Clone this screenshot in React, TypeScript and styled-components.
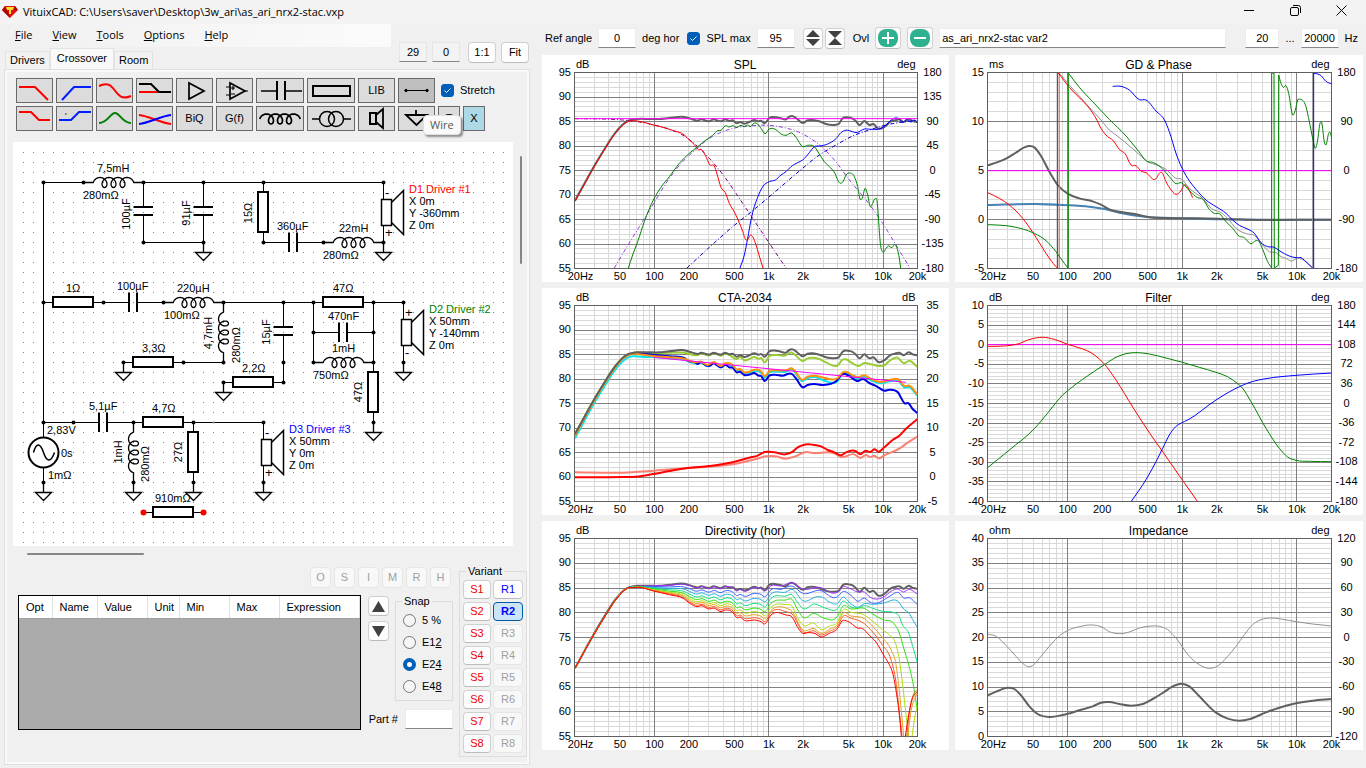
import React from "react";
import styled, { createGlobalStyle } from "styled-components";

const GlobalStyle = createGlobalStyle`
  *, *::before, *::after { box-sizing: border-box; }
  body {
    margin: 0;
    background: #f0f0f0;
    color: #000;
    font-family: "Liberation Sans", Arial, sans-serif;
    font-size: 11px;
    line-height: 13px;
  }
  button, input { font: inherit; color: inherit; margin: 0; }
`;

/* ---------- shell ---------- */

const Window = styled.div`
  display: flex;
  flex-direction: column;
  min-height: 100vh;
`;

const TitleBar = styled.header`
  display: flex;
  align-items: center;
  height: 24px;
  padding: 0 5px 0 2px;
  gap: 5px;
  background: #f3f3f3;
`;

const TitleText = styled.h1`
  flex: 1;
  margin: 0 0 2px;
  font-family: "Open Sans", sans-serif;
  font-size: 11px;
  font-weight: 400;
`;

const CaptionButton = styled.button`
  display: grid;
  place-items: center;
  width: 40px;
  height: 20px;
  margin-bottom: 4px;
  padding: 0;
  border: 0;
  background: none;
`;

const Body = styled.main`
  display: flex;
  flex: 1;
`;

const LeftColumn = styled.div`
  display: flex;
  flex-direction: column;
  flex: 0 0 536px;
`;

const LeftHead = styled.div`
  display: flex;
  height: 45px;
`;

const HeadStack = styled.div`
  display: flex;
  flex-direction: column;
  justify-content: space-between;
  width: 391px;
`;

const MenuBar = styled.nav`
  display: flex;
  gap: 4px;
  height: 23px;
  padding-left: 7px;
  background: linear-gradient(90deg, #f0f0f0, #fbfbfb);
`;

const MenuItem = styled.button`
  padding: 0 8px 2px;
  border: 0;
  background: none;
  font-family: "Open Sans", sans-serif;
  font-size: 11px;
`;

const Tabs = styled.div`
  display: flex;
  align-items: flex-end;
  padding-left: 5px;
`;

const Tab = styled.button<{ $active?: boolean }>`
  height: ${(p) => (p.$active ? 21 : 18)}px;
  padding: ${(p) => (p.$active ? "0 6px 2px" : "0 4px 1px")};
  border: 1px solid #e3e3e3;
  border-bottom: 0;
  background: ${(p) => (p.$active ? "#f9f9f9" : "#f2f2f2")};
`;

const ZoomTools = styled.div`
  display: flex;
  gap: 5px;
  padding: 18px 0 0 8px;
`;

const Readout = styled.output`
  display: grid;
  place-items: center;
  width: 28px;
  height: 20px;
  border: 1px solid #e6e6e6;
  border-bottom-color: #868686;
  background: #f3f3f3;
`;

const PlainButton = styled.button<{ $w: number; $h: number; $tone?: string; $active?: boolean; $gap?: number }>`
  display: grid;
  place-items: center;
  width: ${(p) => p.$w}px;
  height: ${(p) => p.$h}px;
  margin-left: ${(p) => p.$gap ?? 0}px;
  padding: 0;
  border: 1px solid ${(p) => (p.$active ? "#005a9e" : "#d0d0d0")};
  border-bottom-color: ${(p) => (p.$active ? "#005a9e" : "#bcbcbc")};
  border-radius: 4px;
  background: ${(p) => (p.$active ? "#cce4f7" : "#fdfdfd")};
  color: ${(p) => p.$tone ?? "#000"};
  font-size: 11px;
  font-weight: ${(p) => (p.$active ? 700 : 400)};

  &:disabled {
    border-color: #e6e6e6;
    background: #f8f8f8;
    color: #a0a0a0;
  }
`;

const Panel = styled.section`
  display: flex;
  flex-direction: column;
  flex: 1;
  margin: 0 6px 3px 4px;
  border: 1px solid #e0e0e0;
  box-shadow: inset 0 0 0 2px #f9f9f9;
`;

/* ---------- part toolbar ---------- */

const PartBar = styled.div`
  display: flex;
  flex-direction: column;
  gap: 3px;
  padding: 8px 0 0 11px;
`;

const PartRow = styled.div`
  position: relative;
  display: flex;
  align-items: center;
  gap: 3px;
`;

const PartButton = styled.button<{ $w?: number; $bg?: string }>`
  display: grid;
  place-items: center;
  width: ${(p) => p.$w ?? 37}px;
  height: 25px;
  padding: 0;
  border: 1px solid #696969;
  background: ${(p) => p.$bg ?? "#dcdcdc"};
`;

const Tooltip = styled.div`
  position: absolute;
  left: 407px;
  top: 9px;
  padding: 2px 6px 3px;
  border: 1px solid #e0e0e0;
  border-radius: 4px;
  background: #f9f9f9;
  box-shadow: 2px 2px 2px rgba(0, 0, 0, 0.4);
  color: #575757;
  font-family: "Open Sans", sans-serif;
  font-size: 11px;
`;

const CheckLabel = styled.label<{ $gap?: number }>`
  display: flex;
  align-items: center;
  gap: 6px;
  margin-left: ${(p) => p.$gap ?? 0}px;
`;

const CheckBox = styled.input.attrs({ type: "checkbox" })`
  width: 13px;
  height: 13px;
  appearance: none;
  border: 1px solid #005fb8;
  border-radius: 3px;
  background: #005fb8
    url("data:image/svg+xml,%3Csvg xmlns='http://www.w3.org/2000/svg' viewBox='0 0 11 11'%3E%3Cpath d='M2.5 5.5l2 2 4-4' fill='none' stroke='white'/%3E%3C/svg%3E");
`;

/* ---------- schematic ---------- */

const CanvasRow = styled.div`
  display: flex;
  gap: 7px;
  margin: 11px 0 0 8px;
`;

const Canvas = styled.svg`
  display: block;
  flex: 0 0 500px;
  height: 404px;
  background: #fff;
  font-size: 11px;
`;

const VerticalThumb = styled.div`
  width: 2px;
  height: 108px;
  margin-top: 14px;
  border-radius: 1px;
  background: #868686;
`;

const HorizontalThumb = styled.div`
  width: 117px;
  height: 2px;
  margin: 7px 0 0 22px;
  border-radius: 1px;
  background: #868686;
`;

/* ---------- lower part ---------- */

const Lower = styled.div`
  display: flex;
  gap: 6px;
  margin: 10px 0 0 13px;
`;

const LowerMain = styled.div`
  display: flex;
  flex-direction: column;
  gap: 7px;
  width: 435px;
  padding-top: 2px;
`;

const ModeRow = styled.div`
  display: flex;
  justify-content: flex-end;
  gap: 3px;
  padding-right: 2px;
`;

const GridRow = styled.div`
  display: flex;
  align-items: flex-start;
  gap: 6px;
`;

const TableFrame = styled.div`
  width: 343px;
  height: 135px;
  border: 1px solid #000;
  background: #ababab;
`;

const ParamTable = styled.table`
  width: 100%;
  table-layout: fixed;
  border-collapse: collapse;
`;

const HeadCell = styled.th<{ $w?: number }>`
  width: ${(p) => (p.$w ? `${p.$w}px` : "auto")};
  height: 22px;
  padding: 2px 0 0 7px;
  border-right: 1px solid #e0e0e0;
  border-bottom: 1px solid #a0a0a0;
  background: #fff;
  font-weight: 400;
  text-align: left;
`;

const ArrowStack = styled.div`
  display: flex;
  flex-direction: column;
  gap: 5px;
  padding: 1px 0 0 1px;
`;

const Side = styled.div`
  flex: 1;
`;

const Group = styled.fieldset`
  min-width: 0;
  margin: 0;
  padding: 1px 3px 3px;
  border: 1px solid #dcdcdc;
`;

const GroupName = styled.legend`
  margin-left: 3px;
  padding: 0 2px;
`;

const RadioLabel = styled.label`
  display: flex;
  align-items: center;
  gap: 6px;
  height: 22px;
  padding-left: 4px;
`;

const Radio = styled.input.attrs({ type: "radio" })`
  width: 13px;
  height: 13px;
  appearance: none;
  border: 1px solid #767676;
  border-radius: 50%;
  background: #f6f6f6;
  &:checked {
    border: 4px solid #005fb8;
    background: #fff;
  }
`;

const PartNumber = styled.label`
  display: flex;
  align-items: center;
  justify-content: flex-end;
  gap: 7px;
  margin-top: -28px;
`;

const Field = styled.input<{ $w?: number; $align?: string }>`
  width: ${(p) => (p.$w ? `${p.$w}px` : "auto")};
  flex: ${(p) => (p.$w ? "none" : "1")};
  min-width: 0;
  height: 20px;
  padding: 0 2px;
  border: 1px solid #ececec;
  border-bottom-color: #868686;
  background: #fff;
  text-align: ${(p) => p.$align ?? "center"};
`;

const VariantGrid = styled.div`
  display: grid;
  grid-template-columns: 28px 30px;
  gap: 3px 2px;
  padding-top: 1px;
`;

/* ---------- right side ---------- */

const RightColumn = styled.div`
  display: flex;
  flex-direction: column;
  flex: 1;
  min-width: 0;
  padding: 0 3px 0 6px;
`;

const RefBar = styled.div`
  display: flex;
  align-items: center;
  gap: 8px;
  height: 31px;
  padding: 0 5px 3px 3px;
`;

const Cluster = styled.div<{ $gap?: number; $grow?: boolean; $indent?: number }>`
  display: flex;
  align-items: center;
  gap: ${(p) => p.$gap ?? 6}px;
  flex: ${(p) => (p.$grow ? "1" : "none")};
  margin-left: ${(p) => p.$indent ?? 0}px;
  min-width: 0;
`;

const Charts = styled.div`
  display: grid;
  grid-template-columns: minmax(0, 407fr) minmax(0, 408fr);
  gap: 6px;
  align-items: start;
`;

const ChartSvg = styled.svg`
  display: block;
  width: 100%;
  background: #fff;
  font-size: 11px;
`;

/* ---------- schematic symbols ---------- */

type P = { x: number; y: number; vertical?: boolean };

const turn = ({ x, y, vertical }: P) => (vertical ? `matrix(0 1 1 0 ${x} ${y})` : `translate(${x} ${y})`);

const Resistor = (p: P) => (
  <g transform={turn(p)}>
    <path d="M0 0H10M50 0H60" stroke="#000" />
    <rect x="9.5" y="-5.5" width="40" height="10" fill="#fff" stroke="#000" strokeWidth="2" />
  </g>
);

const Capacitor = ({ from, to, ...p }: P & { from: number; to: number }) => (
  <g transform={turn(p)}>
    <path d={`M${from} 0H-4M4 0H${to}`} stroke="#000" />
    <path d="M-4.5 -10V9.5M3.5 -10V9.5" stroke="#000" strokeWidth="2" />
  </g>
);

const coilPath = (() => {
  const pts: string[] = [];
  const c = 9 / (2 * Math.PI);
  for (let t = -Math.PI / 2; t <= 6.5 * Math.PI + 0.01; t += Math.PI / 12) {
    pts.push(`${(16.5 + c * t + 4.5 * Math.sin(t)).toFixed(2)} ${(-5 * Math.cos(t)).toFixed(2)}`);
  }
  return `M0 0H10L${pts.join("L")}H60`;
})();

const Inductor = (p: P) => (
  <path d={coilPath} transform={turn(p)} fill="none" stroke="#000" strokeWidth="1.3" />
);

const Ground = ({ x, y }: P) => (
  <path d={`M${x} ${y}v10h-8l8 8l8 -8h-8`} fill="#fff" stroke="#000" strokeWidth="1.3" />
);

const Speaker = ({ x, y }: P) => (
  <path
    d={`M${x - 2} ${y}h10v26h-10zM${x + 8} ${y + 3}l12 -12v44l-12 -12`}
    fill="#fff"
    stroke="#000"
    strokeWidth="1.5"
  />
);

const dots: [number, number][] = [
  [43, 182], [83, 182], [143, 182], [203, 182], [263, 182], [383, 182],
  [143, 242], [203, 242], [263, 242], [323, 242], [383, 242],
  [43, 302], [103, 302], [163, 302], [223, 302], [283, 302], [313, 302], [373, 302], [403, 302],
  [313, 332], [373, 332], [123, 362], [183, 362], [223, 362], [283, 362], [313, 362], [373, 362], [403, 362],
  [223, 382], [283, 382], [373, 422],
  [43, 422], [73, 422], [133, 422], [193, 422], [263, 422],
  [43, 482], [133, 482], [193, 482], [263, 482],
];

const grounds: [number, number][] = [
  [203, 242], [383, 242], [123, 362], [223, 382], [403, 362], [373, 422], [43, 482], [133, 482], [193, 482], [263, 482],
];

const labels: [number, number, string][] = [
  [97, 172, "7,5mH"], [83, 199, "280mΩ"], [277, 230, "360µF"], [339, 232, "22mH"], [323, 259, "280mΩ"],
  [66, 292, "1Ω"], [117, 290, "100µF"], [177, 292, "220µH"], [164, 319, "100mΩ"], [333, 292, "47Ω"],
  [328, 320, "470nF"], [332, 352, "1mH"], [313, 379, "750mΩ"], [142, 352, "3,3Ω"], [242, 372, "2,2Ω"],
  [89, 410, "5,1µF"], [152, 412, "4,7Ω"], [155, 502, "910mΩ"], [47, 434, "2,83V"], [61, 457, "0s"], [48, 479, "1mΩ"],
];

const signs: [number, number, string][] = [
  [385, 197, "-"], [385, 237, "+"], [405, 317, "+"], [405, 357, "-"], [265, 437, "-"], [265, 477, "+"],
];

const upright: [number, number, string][] = [
  [130, 214, "100µF"], [190, 213, "91µF"], [252, 213, "15Ω"], [212, 333, "4,7mH"], [240, 345, "280mΩ"],
  [270, 332, "15µF"], [362, 392, "47Ω"], [122, 452, "1mH"], [149, 464, "280mΩ"], [182, 452, "27Ω"],
];

const drivers = [
  { x: 409, y: 193, color: "#ff0000", lines: ["D1 Driver #1", "X 0m", "Y -360mm", "Z 0m"] },
  { x: 429, y: 313, color: "#008000", lines: ["D2 Driver #2", "X 50mm", "Y -140mm", "Z 0m"] },
  { x: 289, y: 433, color: "#0000ff", lines: ["D3 Driver #3", "X 50mm", "Y 0m", "Z 0m"] },
];

const Schematic = () => (
  <Canvas viewBox="13 142 500 404" role="img" aria-label="Crossover schematic">
    <defs>
      <pattern id="dots" x="23" y="152" width="10" height="10" patternUnits="userSpaceOnUse">
        <rect width="1" height="1" fill="#808080" />
      </pattern>
    </defs>
    <rect x="20" y="150" width="490" height="394" fill="url(#dots)" />
    <g transform="translate(.5 .5)" fill="none">
      <path
        stroke="#000"
        d="M43 182H83M143 182H383V242M143 242H203M43 182V437M43 467V482M183 362H223M223 302H313M313 302V362M373 302V362M373 302H403V362M43 422H73M193 422H263V482M143 512H153M193 512H203"
      />
      {grounds.map(([x, y]) => <Ground key={`${x}-${y}`} x={x} y={y} />)}
      <Inductor x={83} y={182} />
      <Capacitor x={143} y={211} vertical from={-29} to={31} />
      <Capacitor x={203} y={211} vertical from={-29} to={31} />
      <Resistor x={263} y={182} vertical />
      <Capacitor x={293} y={242} from={-30} to={30} />
      <Inductor x={323} y={242} />
      <Resistor x={43} y={302} />
      <Capacitor x={133} y={302} from={-30} to={30} />
      <Inductor x={163} y={302} />
      <Inductor x={223} y={302} vertical />
      <Capacitor x={283} y={331} vertical from={-29} to={51} />
      <Resistor x={123} y={362} />
      <Resistor x={223} y={382} />
      <Resistor x={313} y={302} />
      <Capacitor x={343} y={332} from={-30} to={30} />
      <Inductor x={313} y={362} />
      <Resistor x={373} y={362} vertical />
      <Capacitor x={103} y={422} from={-30} to={30} />
      <Resistor x={133} y={422} />
      <Inductor x={133} y={422} vertical />
      <Resistor x={193} y={422} vertical />
      <Resistor x={143} y={512} />
      <Speaker x={383} y={199} />
      <Speaker x={403} y={319} />
      <Speaker x={263} y={439} />
      <circle cx="43" cy="452" r="15" fill="#fff" stroke="#000" strokeWidth="2" />
      <path d="M33 452C36 441 40 443 43 452S50 463 54 452" stroke="#000" strokeWidth="1.5" />
      {dots.map(([x, y]) => <circle key={`${x}-${y}`} cx={x} cy={y} r="2" fill="#000" />)}
      <circle cx="213" cy="422" r="1" fill="#808080" />
      <circle cx="143" cy="512" r="3" fill="#f00" />
      <circle cx="203" cy="512" r="3" fill="#f00" />
    </g>
    {labels.map(([x, y, t]) => <text key={`${x}-${y}`} x={x} y={y}>{t}</text>)}
    {signs.map(([x, y, t]) => <text key={`${x}-${y}`} x={x} y={y} fontSize="13">{t}</text>)}
    {upright.map(([x, y, t]) => (
      <text key={`${x}-${y}`} transform={`translate(${x} ${y}) rotate(-90)`} textAnchor="middle">{t}</text>
    ))}
    {drivers.map((d) =>
      d.lines.map((line, i) => (
        <text key={line + d.x} x={d.x} y={d.y + 12 * i} fill={i ? "#000" : d.color}>{line}</text>
      ))
    )}
  </Canvas>
);

/* ---------- charts ---------- */

type Pt = [number, number];
type Trace = { c: string; w?: number; dash?: string; p: Pt[]; sharp?: boolean };

const pts = (s: string): Pt[] => s.trim().split(/\s+/).map((q) => q.split(",").map(Number) as Pt);
const shift = (p: Pt[], dy: number): Pt[] => p.map(([x, y]) => [x, y + dy]);

/* Trace points are stored at three units per pixel; each point's tangent follows the slopes on both sides of it. */
const spline = (raw: Pt[], sharp?: boolean) => {
  const p = raw.map(([x, y]) => [x / 3, y / 3] as Pt);
  const n = p.length;
  const start = `M${p[0][0].toFixed(2)} ${p[0][1].toFixed(2)}`;
  if (sharp) return start + p.slice(1).map(([x, y]) => `L${x.toFixed(2)} ${y.toFixed(2)}`).join("");
  const slope = p.slice(1).map(([x, y], i) => (y - p[i][1]) / (x - p[i][0]));
  const tangent = p.map((_, i) => {
    if (i === 0) return slope[0];
    if (i === n - 1) return slope[n - 2];
    const h0 = p[i][0] - p[i - 1][0], h1 = p[i + 1][0] - p[i][0];
    return (slope[i - 1] * h1 + slope[i] * h0) / (h0 + h1);
  });
  let d = start;
  for (let i = 0; i < n - 1; i++) {
    const [ax, ay] = p[i], [bx, by] = p[i + 1], h = (bx - ax) / 3;
    d += `C${(ax + h).toFixed(2)} ${(ay + h * tangent[i]).toFixed(2)} ${(bx - h).toFixed(2)} ${(by - h * tangent[i + 1]).toFixed(2)} ${bx.toFixed(2)} ${by.toFixed(2)}`;
  }
  return d;
};

type ChartProps = {
  id: string;
  title: string;
  unit: string;
  unitRight?: string;
  left: (number | string)[];
  right?: (number | string)[];
  width: number;
  height: number;
  origin: Pt;
  traces: Trace[];
};

const xLabels: [number, string][] = [
  [50, "50"], [100, "100"], [200, "200"], [500, "500"], [1000, "1k"], [2000, "2k"], [5000, "5k"], [10000, "10k"], [20000, "20k"],
];

const Chart = ({ id, title, unit, unitRight, left, right, width, height, origin, traces }: ChartProps) => {
  const x0 = 32.5, x1 = width - 31.5, y0 = 17.5, y1 = height - 13.5;
  const fx = (f: number) => x0 + ((x1 - x0) * Math.log10(f / 20)) / 3;
  const snap = (v: number) => Math.floor(v) + 0.5;
  const divs = left.length - 1;
  const minorX: number[] = [];
  for (const dec of [10, 100, 1000, 10000])
    for (let k = 2; k < 10; k++) if (dec * k > 20 && dec * k < 20000) minorX.push(dec * k);
  const step = (y1 - y0) / divs;
  return (
    <ChartSvg viewBox={`0 0 ${width} ${height}`} role="img" aria-label={title}>
      <clipPath id={id}><rect x={x0} y={y0} width={x1 - x0} height={y1 - y0} /></clipPath>
      <path
        stroke="#d9d9d9"
        d={minorX.map((f) => `M${snap(fx(f))} ${y0}V${y1}`).join("") +
          Array.from({ length: divs * 5 }, (_, i) => (i % 5 ? `M${x0} ${snap(y0 + (step * i) / 5)}H${x1}` : "")).join("")}
      />
      <path
        stroke="#808080"
        d={[100, 1000, 10000].map((f) => `M${snap(fx(f))} ${y0}V${y1}`).join("") +
          Array.from({ length: divs - 1 }, (_, i) => `M${x0} ${snap(y0 + step * (i + 1))}H${x1}`).join("")}
      />
      <rect x={x0} y={y0} width={x1 - x0} height={y1 - y0} fill="none" stroke="#606060" />
      <g clipPath={`url(#${id})`} fill="none">
        <g transform={`translate(${-origin[0] / 3} ${-origin[1] / 3})`}>
          {traces.map((t, i) => (
            <path key={i} d={spline(t.p, t.sharp)} stroke={t.c} strokeWidth={t.w ?? 1} strokeDasharray={t.dash} strokeLinejoin="round" />
          ))}
        </g>
      </g>
      <text x="34" y="13">{unit}</text>
      <text x={x1 - 2} y="13" textAnchor="end">{unitRight}</text>
      <text x={(x0 + x1) / 2 - 1} y="14" textAnchor="middle" fontSize="12">{title}</text>
      {left.map((v, i) => <text key={i} x="29" y={y0 + step * i + 3} textAnchor="end">{v}</text>)}
      {right?.map((v, i) => (
        <text key={i} x={x1 + 15} y={y0 + ((y1 - y0) * i) / (right.length - 1) + 3} textAnchor="middle">{v}</text>
      ))}
      <text x={x0 + 6} y={height - 2} textAnchor="middle">20Hz</text>
      {xLabels.map(([f, t]) => <text key={f} x={fx(f)} y={height - 2} textAnchor="middle">{t}</text>)}
    </ChartSvg>
  );
};

const range = (from: number, to: number, by: number) =>
  Array.from({ length: Math.round((to - from) / by) + 1 }, (_, i) => from + i * by);

const total = pts(`117,602 150,542 180,489 210,440 235,402 250,384 262,372 275,363 290,359 305,357 340,357 370,357 400,354 445,351 460,355 475,360 485,362 495,358 510,362 520,364 533,358 545,362 555,364 568,358 580,363 590,361 602,370 612,366 625,371 640,366 655,360 668,364 675,362 686,370 700,354 720,352 735,355 750,358 760,350 768,348 780,354 800,369 815,361 830,360 850,364 870,372 900,374 908,372 920,355 935,352 950,356 960,364 970,375 985,363 1000,375 1012,372 1027,386 1045,381 1062,366 1080,360 1090,358 1103,366 1118,357 1130,363 1144,366`);

const GRAY = "#606060";
const MAGENTA = "#ff00ff";

const spl: Trace[] = [
  { c: GRAY, w: 2, p: total },
  { c: "#800080", dash: "4 2 1 2", p: pts("117,356 200,357 260,360 310,366 352,374 400,388 445,408 480,435 520,475 560,523 600,580 640,640 680,700 715,752 750,804") },
  { c: "#9040e0", dash: "4 2 1 2", p: pts("235,804 270,745 310,680 352,612 400,535 440,485 480,448 520,415 560,395 600,383 650,377 700,376 740,382 780,393 820,413 860,443 900,486 940,540 990,600 1040,670 1080,735 1122,804") },
  { c: "#0000c8", dash: "4 2 1 2", p: pts("453,804 520,742 590,680 650,632 720,573 790,513 850,465 900,435 950,408 1000,390 1050,375 1100,366 1144,361") },
  { c: "#ff0000", p: pts("117,604 150,544 180,491 210,442 235,404 250,386 262,374 275,365 290,362 310,364 352,375 385,383 410,391 445,405 460,420 475,434 487,449 497,449 508,466 522,495 535,498 543,522 555,562 568,578 580,610 595,636 610,668 620,694 630,720 638,714 642,706 650,710 660,735 672,775 681,804") },
  { c: "#008000", p: pts("277,804 290,765 305,725 325,665 352,600 375,562 400,530 430,490 460,460 485,440 510,420 530,406 545,392 555,391 568,377 580,381 590,377 602,382 615,376 625,380 635,375 642,380 655,369 665,372 675,385 687,401 700,387 720,389 735,402 750,406 768,399 780,412 800,440 815,436 835,440 850,462 865,485 880,500 897,520 905,540 913,550 922,543 930,525 940,519 955,530 965,560 972,597 978,596 988,565 995,585 1003,620 1010,610 1017,596 1024,610 1028,665 1033,730 1040,756 1050,745 1057,738 1068,743 1077,733 1084,748 1090,775 1094,804") },
  { c: "#0000ff", p: pts("612,804 625,765 635,715 645,660 655,620 665,592 680,560 700,545 718,540 735,525 750,515 765,500 785,488 800,480 820,458 835,440 850,438 875,432 900,416 915,398 925,392 965,397 985,387 1005,388 1035,385 1050,375 1062,363 1088,356 1098,367 1112,359 1125,366 1135,360 1144,366") },
  { c: MAGENTA, p: pts("117,356 1144,356") },
];

const phase: Trace[] = [
  { c: "#4682b4", w: 2, p: pts("125,615 270,612 350,615 430,620 480,628 520,638 600,650 700,655 830,658 1157,659") },
  { c: GRAY, w: 2, p: pts("125,496 150,488 180,476 210,458 235,442 252,438 265,442 285,468 310,515 335,555 365,581 400,595 440,604 465,614 490,628 530,637 570,643 610,652 660,654 750,655 830,657 900,659 1157,659") },
  { c: "#909090", p: pts("340,219 370,255 400,288 430,322 465,360 490,390 510,405 535,425 570,455 605,485 640,498 660,508 690,535 706,537 730,565 770,595 800,628 820,635 845,655 870,685 905,702 925,706 950,735 970,755 990,758 1005,770 1020,775 1035,783 1055,775 1075,782 1100,804") },
  { c: "#909090", sharp: true, p: pts("340,219 340,804") },
  { c: "#909090", sharp: true, p: pts("1100,804 1100,219") },
  { c: MAGENTA, p: pts("125,512 1157,512") },
  { c: "#ff0000", p: pts("125,578 160,595 190,615 230,655 270,712 300,760 330,800 334,804") },
  { c: "#c00000", sharp: true, p: pts("335,804 335,219") },
  { c: "#ff0000", p: pts("337,219 370,262 400,293 430,325 450,355 465,385 485,410 500,420 520,448 538,462 555,495 570,497 585,513 600,518 630,536 640,520 648,518 660,545 672,565 690,583 705,572 715,555 725,562 740,593") },
  { c: "#008000", p: pts("125,674 180,677 230,687 265,700 300,722 330,755 355,790 366,804") },
  { c: "#008000", sharp: true, p: pts("367,804 367,219") },
  { c: "#008000", p: pts("367,219 400,262 440,305 490,358 540,408 575,450 605,485 620,487 650,507 670,530 690,551 706,548 730,572 755,593 770,597 790,628 805,640 820,641 840,665 860,685 880,709 893,712 915,731 930,722 937,722 950,748 965,785 977,804") },
  { c: "#008000", sharp: true, p: pts("977,804 977,219 984,219 985,804 997,796 998,225") },
  { c: "#008000", p: pts("998,225 1005,250 1012,262 1020,257 1028,280 1040,345 1048,330 1055,300 1062,298 1080,320 1090,365 1100,415 1108,445 1115,420 1122,370 1127,368 1135,425 1140,435 1148,400 1153,398 1157,415") },
  { c: "#0000ff", p: pts("500,259 525,259 550,270 580,299 600,300 630,333 657,363 670,395 690,460 706,500 725,535 750,568 780,600 810,620 840,640 860,660 880,676 900,685 925,700 945,728 965,740 985,742 1000,752 1030,768 1050,773 1065,773 1085,790 1100,804") },
  { c: "#0000d0", sharp: true, p: pts("1103,804 1103,219") },
  { c: "#0000ff", p: pts("1102,219 1125,227 1140,244 1157,252") },
];

const onAxis = shift(total, -155);
const rise = onAxis.slice(0, 10);
const orange = pts("117,453 150,391 180,338 210,289 235,251 250,232 262,220 275,211 290,207 320,209 352,213 400,217 445,221 475,232 495,230 515,240 533,231 555,243 568,235 590,240 602,253 612,252 625,262 640,260 655,254 675,259 686,274 700,258 720,256 750,256 768,250 780,262 797,284 815,275 835,272 870,280 905,279 920,262 930,260 945,268 965,277 985,271 1005,282 1035,291 1060,285 1088,284 1105,303 1120,302 1144,328");

const cta: Trace[] = [
  { c: "#9acd32", w: 2, p: [...rise, ...pts("340,205 400,203 445,203 485,210 495,206 520,211 533,205 555,212 568,206 585,213 602,222 612,216 625,226 640,222 655,216 668,221 675,219 686,232 700,214 718,210 745,212 768,203 780,212 800,228 815,220 830,218 850,222 870,232 905,241 920,224 930,223 945,232 968,243 985,234 1005,238 1030,243 1045,241 1060,228 1085,218 1103,235 1120,227 1144,246")] },
  { c: "#00e5ee", w: 2, p: orange.map(([x, y]) => [x, y + (x < 330 ? 7 : x < 500 ? 3 : x > 850 && x < 910 ? 9 : 4)] as Pt) },
  { c: "#0000e6", w: 2, p: pts("290,204 320,206 350,209 400,214 445,219 460,229 475,231 485,237 495,231 508,240 520,243 533,235 545,242 555,247 568,239 580,247 590,248 602,262 612,260 625,270 640,269 655,264 668,272 675,273 686,288 700,272 715,269 740,272 768,267 780,280 800,307 815,300 835,297 860,300 900,289 920,267 935,270 967,288 980,282 1000,294 1022,304 1045,317 1060,314 1085,321 1106,355 1118,355 1130,372 1144,384") },
  { c: "#ff9010", w: 2, p: orange },
  { c: GRAY, w: 2, p: onAxis },
  { c: MAGENTA, p: pts("352,217 1110,292") },
  { c: "#fa8072", w: 2, p: pts("117,562 260,563 352,557 455,549 590,538 660,522 690,514 720,514 748,521 775,515 810,501 830,504 895,505 917,516 955,508 973,519 990,510 1002,516 1015,512 1028,520 1045,511 1090,491 1115,473 1144,455") },
  { c: "#ff0000", w: 2, p: pts("117,577 260,576 300,575 352,567 400,558 455,549 520,543 590,532 640,518 665,512 686,501 715,502 748,508 770,500 785,487 805,479 830,479 855,484 875,495 895,502 915,511 930,502 958,498 973,508 988,497 1003,501 1015,493 1028,500 1045,487 1070,465 1090,452 1110,431 1130,414 1144,403") },
];

const filter: Trace[] = [
  { c: MAGENTA, p: pts("125,179 1157,179") },
  { c: "#ff0000", p: pts("125,184 175,183 215,177 255,162 290,157 325,163 365,178 410,192 435,203 460,222 475,237 510,285 560,366 610,443 648,497 700,572 754,649") },
  { c: "#008000", p: pts("125,548 190,495 265,431 310,378 350,330 375,309 410,283 475,239 510,217 540,206 570,203 610,207 660,219 706,231 760,247 810,262 840,273 870,292 890,310 915,350 960,430 1000,490 1025,516 1050,526 1090,529 1157,530") },
  { c: "#0000ff", p: pts("556,649 600,584 630,530 650,490 670,450 688,426 706,414 725,405 810,345 870,310 915,291 960,281 1050,271 1157,264") },
];

/* Below 700 Hz the off-axis responses spread evenly between the on-axis and the widest one. */
const lowX = [352, 400, 445, 460, 485, 495, 520, 533, 555, 568, 592, 602, 612, 625, 655, 675, 686];
const lowTop = [203, 201, 198, 201, 208, 204, 210, 204, 210, 204, 208, 216, 212, 217, 206, 209, 216];
const lowEnd = [219, 230, 243, 255, 266, 263, 273, 270, 281, 276, 285, 299, 297, 307, 306, 311, 318];
const bass = pts("117,450 150,391 180,339 210,290 235,251 250,232 262,219 275,210 290,206 310,205");

const off = (c: string, k: number, high: string): Trace => ({
  c,
  p: [
    ...bass.map(([x, y]) => [x, y + (x > 280 ? k * 3 : 0)] as Pt),
    ...lowX.map((x, i) => [x, lowTop[i] + (lowEnd[i] - lowTop[i]) * k] as Pt),
    ...pts(high),
  ],
});

const directivity: Trace[] = [
  { c: GRAY, w: 2, p: total.map(([x, y]) => [x, 62 + ((y - 217) * 593) / 587] as Pt) },
  off("#a030ff", 0.03, "705,203 735,204 768,195 800,213 850,208 905,222 920,207 945,213 965,222 985,222 1003,238 1025,243 1045,236 1065,220 1085,213 1103,222 1118,214 1144,228"),
  off("#4060ff", 0.2, "705,215 735,214 768,204 800,226 850,217 905,236 920,221 945,232 965,250 985,240 1003,253 1020,256 1045,245 1065,232 1088,224 1103,240 1120,239 1144,260"),
  off("#20b0e0", 0.35, "705,228 750,222 768,214 800,248 845,236 860,238 880,252 905,256 920,238 945,258 965,268 985,257 1010,259 1040,256 1090,254 1103,273 1118,284 1130,305 1144,328"),
  off("#10e080", 0.5, "705,241 750,234 768,230 785,254 800,271 835,258 870,271 905,272 920,250 945,267 965,270 985,263 1010,271 1040,280 1075,284 1088,292 1100,322 1118,345 1130,385 1144,433"),
  off("#30e010", 0.64, "705,256 750,246 768,244 785,275 800,297 835,286 865,301 905,294 920,265 945,273 985,271 1010,288 1040,305 1075,318 1090,345 1103,390 1118,440 1130,490 1144,575"),
  off("#b0dc10", 0.75, "705,268 750,260 768,264 785,300 800,321 835,316 855,335 880,324 905,311 920,277 945,283 985,291 1010,310 1040,335 1060,351 1080,380 1090,425 1100,500 1110,590 1118,655"),
  { c: "#b0dc10", p: pts("1128,655 1136,600 1144,560") },
  off("#e8a020", 0.84, "705,277 750,270 768,280 800,336 835,332 855,346 880,334 905,318 920,287 945,294 985,302 1010,325 1040,360 1065,395 1080,440 1090,520 1098,600 1103,655"),
  { c: "#e8a020", p: pts("1115,655 1125,580 1144,525") },
  off("#f06020", 0.93, "705,283 750,281 768,288 800,341 835,339 855,351 880,340 905,325 920,296 945,301 985,317 1010,342 1040,382 1065,425 1078,480 1090,580 1098,655"),
  { c: "#f06020", p: pts("1112,655 1122,570 1132,530 1144,514") },
  off("#ff0000", 1, "705,291 750,291 768,297 785,328 800,346 815,344 840,348 852,356 880,346 905,331 918,309 935,310 965,330 980,332 1000,352 1020,372 1045,415 1060,440 1070,465 1082,530 1093,620 1096,655"),
  { c: "#ff0000", p: pts("1108,655 1118,590 1128,545 1144,520") },
];

const impedance: Trace[] = [
  { c: "#909090", p: pts("125,348 150,355 180,382 210,415 235,440 248,446 262,441 285,415 310,385 335,358 360,340 400,326 440,321 465,326 490,341 520,347 550,342 580,330 615,324 640,325 665,335 690,360 730,415 760,440 790,451 815,444 845,415 870,385 895,350 920,320 945,305 975,300 1010,304 1050,311 1100,318 1157,324") },
  { c: GRAY, w: 2, p: pts("125,532 155,519 185,509 205,513 225,532 250,565 275,588 310,597 350,591 400,577 440,565 465,554 490,552 520,558 555,563 590,558 620,543 650,525 680,505 706,497 730,505 760,535 810,584 845,602 880,608 915,602 960,583 1000,569 1050,556 1100,548 1157,543") },
];

/* ---------- icons ---------- */

const Glyph = ({ w = 35, children }: { w?: number; children: React.ReactNode }) => (
  <svg width={w} height="23" viewBox={`0 0 ${w} 23`} fill="none" stroke="#000" strokeWidth="2" aria-hidden="true">{children}</svg>
);

const Logo = () => (
  <svg width="16" height="14" viewBox="0 0 16 14" aria-hidden="true">
    <path d="M3 1H13L16 5L8 13L0 5Z" fill="#e01010" />
    <path d="M3 1L5 5L0 5ZM13 1L11 5H16ZM5 5L8 13L0 5Z" fill="#a80808" />
    <path d="M4 2H12L11 5H9V9H7V5H5Z" fill="#ffe020" />
  </svg>
);

const partsTop: { name: string; w?: number; bg?: string; face: React.ReactNode }[] = [
  { name: "Low pass", face: <Glyph><path d="M2 8H18L31 21" stroke="#f00" /></Glyph> },
  { name: "High pass", face: <Glyph><path d="M5 21L17 8H34" stroke="#0020ff" /></Glyph> },
  { name: "Shelf", face: <Glyph><path d="M2 7C20 -2 16 25 34 17" stroke="#f00" /></Glyph> },
  { name: "Low shelf", face: <Glyph><path d="M2 13H22" stroke="#f00" /><path d="M2 5H14L22 13H34" /></Glyph> },
  { name: "Buffer", face: <Glyph><path d="M12 4V20L27 12Z" strokeWidth="1.7" /></Glyph> },
  { name: "Operational amplifier", face: <Glyph><path d="M13 4V20L28 12Z" strokeWidth="1.7" /><path d="M9 8H13M9 16H13M28 12H31M14 9H18M16 7V11M14 15H18" strokeWidth="1.2" /></Glyph> },
  { name: "Capacitor", w: 48, face: <Glyph w={46}><path d="M4 12H20M28 12H45" strokeWidth="1.3" /><path d="M20 2V21M28 2V21" /></Glyph> },
  { name: "Resistor", w: 48, face: <Glyph w={46}><path d="M5 7H42V17H5Z" /></Glyph> },
  { name: "Library", face: "LIB" },
  { name: "Wire", bg: "#bebebe", face: <Glyph><path d="M7 11.5H28" strokeWidth="1" /><circle cx="7" cy="11.5" r="1.2" fill="#000" strokeWidth="1" /><circle cx="28" cy="11.5" r="1.2" fill="#000" strokeWidth="1" /></Glyph> },
];

const partsBottom: typeof partsTop = [
  { name: "Shelf down", face: <Glyph><path d="M2 5H14L22 13H33" stroke="#f00" /></Glyph> },
  { name: "Shelf up", face: <Glyph><path d="M2 13H14L22 5H34" stroke="#0020ff" /><path d="M8 7h1.500" stroke="#777" /></Glyph> },
  { name: "Peak", face: <Glyph><path d="M2 16C11 16 13 6 18 6S25 16 34 16" stroke="#008000" /></Glyph> },
  { name: "All pass", face: <Glyph><path d="M2 8C12 9 24 16 34 17" stroke="#f00" /><path d="M2 17C12 16 24 9 34 8" stroke="#0000ff" /></Glyph> },
  { name: "Biquad", face: "BiQ" },
  { name: "Transfer function", face: "G(f)" },
  { name: "Inductor", w: 48, face: <Glyph w={46}><path d={coilPath.replace("M0 0H10L", "M").replace("H60", "")} transform="translate(-7 12)" strokeWidth="1.7" /></Glyph> },
  { name: "Transformer", w: 48, face: <Glyph w={46}><path d="M4 12H11M35 12H43" strokeWidth="1.3" /><circle cx="19" cy="12" r="7.500" strokeWidth="1.500" /><circle cx="28" cy="12" r="7.500" strokeWidth="1.500" /></Glyph> },
  { name: "Driver", face: <Glyph><path d="M11 6H17V17H11Z" /><path d="M17 8L24 2V21L17 15" strokeWidth="1.800" /></Glyph> },
  { name: "Ground", face: <Glyph><path d="M17 3V8M7 8H28L17.500 18Z" strokeWidth="1.800" /></Glyph> },
];

const PlusMinus = ({ plus }: { plus?: boolean }) => (
  <svg width="22" height="18" viewBox="0 0 22 18" aria-hidden="true">
    <rect x="1" width="20" height="18" rx="8" fill="#2fb190" />
    <path d={plus ? "M5 9H17M11 3V15" : "M5 9H17"} stroke="#fff" strokeWidth="2" />
  </svg>
);

const headers: [string, number?][] = [["Opt", 33], ["Name", 45], ["Value", 50], ["Unit", 32], ["Min", 50], ["Max", 50], ["Expression"]];

export default function App() {
  return (
    <Window>
      <GlobalStyle />
      <TitleBar>
        <Logo />
        <TitleText>VituixCAD: C:\Users\saver\Desktop\3w_ari\as_ari_nrx2-stac.vxp</TitleText>
        <Cluster>
          <CaptionButton aria-label="Minimize">
            <svg width="11" height="11" fill="none" stroke="#000"><path d="M0 5.5H10" /></svg>
          </CaptionButton>
          <CaptionButton aria-label="Restore">
            <svg width="11" height="11" fill="none" stroke="#000"><rect x=".5" y="2.500" width="8" height="8" rx="1.500" /><path d="M3 .5H8.500Q10.500 .5 10.500 2.500V8" /></svg>
          </CaptionButton>
          <CaptionButton aria-label="Close">
            <svg width="11" height="11" fill="none" stroke="#000"><path d="M.5 .5L10.500 10.500M10.500 .5L.5 10.500" /></svg>
          </CaptionButton>
        </Cluster>
      </TitleBar>

      <Body>
        <LeftColumn>
          <LeftHead>
            <HeadStack>
              <MenuBar>
                {["File", "View", "Tools", "Options", "Help"].map((m) => (
                  <MenuItem key={m}><u>{m[0]}</u>{m.slice(1)}</MenuItem>
                ))}
              </MenuBar>
              <Tabs role="tablist">
                <Tab role="tab">Drivers</Tab>
                <Tab role="tab" $active aria-selected>Crossover</Tab>
                <Tab role="tab">Room</Tab>
              </Tabs>
            </HeadStack>
            <ZoomTools>
              <Readout>29</Readout>
              <Readout>0</Readout>
              <PlainButton $w={28} $h={21} $gap={3}>1:1</PlainButton>
              <PlainButton $w={28} $h={21}>Fit</PlainButton>
            </ZoomTools>
          </LeftHead>

          <Panel>
            <PartBar>
              <PartRow>
                {partsTop.map((b) => (
                  <PartButton key={b.name} $w={b.w} $bg={b.bg} aria-label={b.name}>{b.face}</PartButton>
                ))}
                <CheckLabel $gap={3}><CheckBox defaultChecked />Stretch</CheckLabel>
              </PartRow>
              <PartRow>
                {partsBottom.map((b) => (
                  <PartButton key={b.name} $w={b.w} aria-label={b.name}>{b.face}</PartButton>
                ))}
                <PartButton $w={22}>T</PartButton>
                <PartButton $w={22} $bg="#add8e6">X</PartButton>
                <Tooltip role="tooltip">Wire</Tooltip>
              </PartRow>
            </PartBar>

            <CanvasRow>
              <Schematic />
              <VerticalThumb />
            </CanvasRow>
            <HorizontalThumb />

            <Lower>
              <LowerMain>
                <ModeRow>
                  {"OSIMRH".split("").map((c) => (
                    <PlainButton key={c} $w={21} $h={21} disabled>{c}</PlainButton>
                  ))}
                </ModeRow>
                <GridRow>
                  <TableFrame>
                    <ParamTable>
                      <thead>
                        <tr>{headers.map(([h, w]) => <HeadCell key={h} $w={w}>{h}</HeadCell>)}</tr>
                      </thead>
                    </ParamTable>
                  </TableFrame>
                  <ArrowStack>
                    <PlainButton $w={21} $h={20} aria-label="Move up">
                      <svg width="13" height="11"><path d="M6.500 0L13 11H0Z" fill="#404040" /></svg>
                    </PlainButton>
                    <PlainButton $w={21} $h={20} aria-label="Move down">
                      <svg width="13" height="11"><path d="M6.500 11L13 0H0Z" fill="#404040" /></svg>
                    </PlainButton>
                  </ArrowStack>
                  <Side>
                    <Group>
                      <GroupName>Snap</GroupName>
                      <RadioLabel><Radio name="snap" />5 %</RadioLabel>
                      <RadioLabel><Radio name="snap" /><span>E1<u>2</u></span></RadioLabel>
                      <RadioLabel><Radio name="snap" defaultChecked /><span>E2<u>4</u></span></RadioLabel>
                      <RadioLabel><Radio name="snap" /><span>E4<u>8</u></span></RadioLabel>
                    </Group>
                  </Side>
                </GridRow>
                <PartNumber>Part #<Field $w={48} defaultValue="" /></PartNumber>
              </LowerMain>

              <Group>
                <GroupName>Variant</GroupName>
                <VariantGrid>
                  {range(1, 8, 1).map((n) => (
                    <React.Fragment key={n}>
                      <PlainButton $w={28} $h={19} $tone="#f00000">S{n}</PlainButton>
                      <PlainButton $w={30} $h={19} $tone="#0000ff" $active={n === 2} disabled={n > 2}>R{n}</PlainButton>
                    </React.Fragment>
                  ))}
                </VariantGrid>
              </Group>
            </Lower>
          </Panel>
        </LeftColumn>

        <RightColumn>
          <RefBar>
            <Cluster>
              <label htmlFor="ref">Ref angle</label>
              <Field id="ref" $w={38} defaultValue="0" />
              <span>deg hor</span>
            </Cluster>
            <Cluster>
              <CheckLabel><CheckBox defaultChecked />SPL max</CheckLabel>
              <Field $w={38} defaultValue="95" aria-label="SPL maximum" />
            </Cluster>
            <Cluster $gap={2}>
              <PlainButton $w={20} $h={21} aria-label="Expand scale">
                <svg width="14" height="16"><path d="M7 0L14 7H0ZM7 16L14 9H0Z" fill="#404040" /></svg>
              </PlainButton>
              <PlainButton $w={20} $h={21} aria-label="Compress scale">
                <svg width="14" height="14"><path d="M0 0H14L7 7ZM0 14H14L7 7Z" fill="#404040" /></svg>
              </PlainButton>
            </Cluster>
            <Cluster $grow>
              <span>Ovl</span>
              <PlainButton $w={26} $h={22} aria-label="Add overlay"><PlusMinus plus /></PlainButton>
              <PlainButton $w={26} $h={22} aria-label="Remove overlay"><PlusMinus /></PlainButton>
              <Field $align="left" defaultValue="as_ari_nrx2-stac var2" aria-label="Overlay name" />
            </Cluster>
            <Cluster $indent={11}>
              <Field $w={34} defaultValue="20" aria-label="Lowest frequency" />
              <span>...</span>
              <Field $w={38} defaultValue="20000" aria-label="Highest frequency" />
              <span>Hz</span>
            </Cluster>
          </RefBar>

          <Charts>
            <Chart id="spl" title="SPL" unit="dB" unitRight="deg" width={407} height={227} origin={[18, 165]}
              left={range(55, 95, 5).reverse()} right={range(-180, 180, 45).reverse()} traces={spl} />
            <Chart id="gd" title="GD & Phase" unit="ms" unitRight="deg" width={408} height={227} origin={[27, 165]}
              left={range(-5, 15, 5).reverse()} right={range(-180, 180, 90).reverse()} traces={phase} />
            <Chart id="cta" title="CTA-2034" unit="dB" unitRight="dB" width={407} height={227} origin={[18, 9]}
              left={range(55, 95, 5).reverse()} right={range(-5, 35, 5).reverse()} traces={cta} />
            <Chart id="filter" title="Filter" unit="dB" unitRight="deg" width={408} height={227} origin={[27, 9]}
              left={range(-40, 10, 5).reverse()} right={range(-180, 180, 36).reverse()} traces={filter} />
            <Chart id="dir" title="Directivity (hor)" unit="dB" width={407} height={229} origin={[18, 9]}
              left={range(55, 95, 5).reverse()} traces={directivity} />
            <Chart id="imp" title="Impedance" unit="ohm" unitRight="deg" width={408} height={229} origin={[27, 9]}
              left={range(0, 40, 5).reverse()} right={range(-120, 120, 30).reverse()} traces={impedance} />
          </Charts>
        </RightColumn>
      </Body>
    </Window>
  );
}
